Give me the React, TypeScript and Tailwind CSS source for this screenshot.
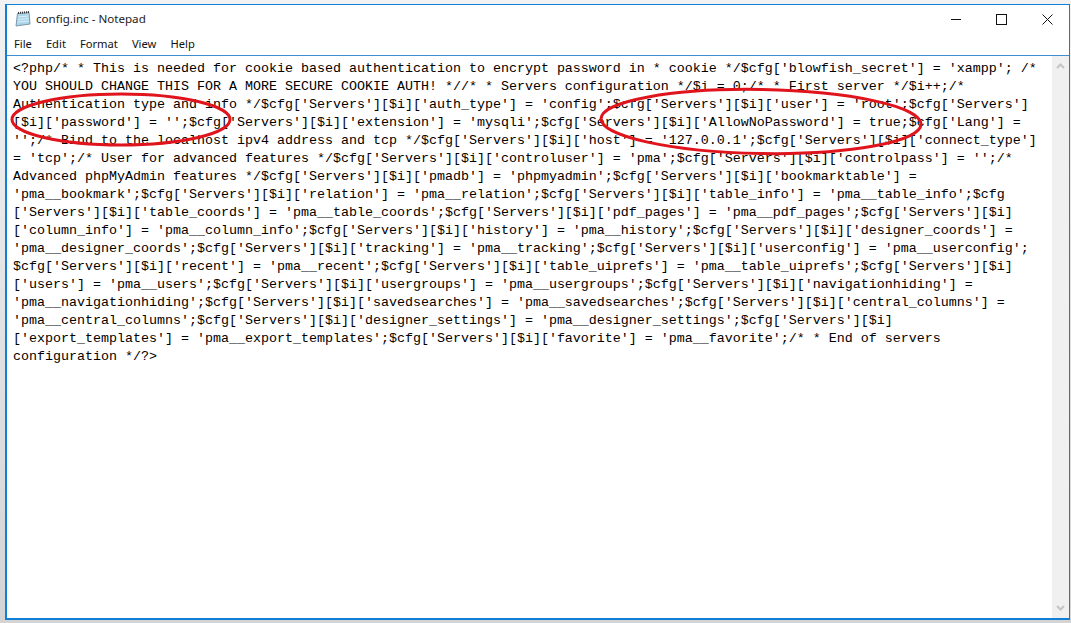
const lines = [
  "<?php/* * This is needed for cookie based authentication to encrypt password in * cookie */$cfg['blowfish_secret'] = 'xampp'; /*",
  "YOU SHOULD CHANGE THIS FOR A MORE SECURE COOKIE AUTH! *//* * Servers configuration */$i = 0;/* * First server */$i++;/*",
  "Authentication type and info */$cfg['Servers'][$i]['auth_type'] = 'config';$cfg['Servers'][$i]['user'] = 'root';$cfg['Servers']",
  "[$i]['password'] = '';$cfg['Servers'][$i]['extension'] = 'mysqli';$cfg['Servers'][$i]['AllowNoPassword'] = true;$cfg['Lang'] =",
  "'';/* Bind to the localhost ipv4 address and tcp */$cfg['Servers'][$i]['host'] = '127.0.0.1';$cfg['Servers'][$i]['connect_type']",
  "= 'tcp';/* User for advanced features */$cfg['Servers'][$i]['controluser'] = 'pma';$cfg['Servers'][$i]['controlpass'] = '';/*",
  "Advanced phpMyAdmin features */$cfg['Servers'][$i]['pmadb'] = 'phpmyadmin';$cfg['Servers'][$i]['bookmarktable'] =",
  "'pma__bookmark';$cfg['Servers'][$i]['relation'] = 'pma__relation';$cfg['Servers'][$i]['table_info'] = 'pma__table_info';$cfg",
  "['Servers'][$i]['table_coords'] = 'pma__table_coords';$cfg['Servers'][$i]['pdf_pages'] = 'pma__pdf_pages';$cfg['Servers'][$i]",
  "['column_info'] = 'pma__column_info';$cfg['Servers'][$i]['history'] = 'pma__history';$cfg['Servers'][$i]['designer_coords'] =",
  "'pma__designer_coords';$cfg['Servers'][$i]['tracking'] = 'pma__tracking';$cfg['Servers'][$i]['userconfig'] = 'pma__userconfig';",
  "$cfg['Servers'][$i]['recent'] = 'pma__recent';$cfg['Servers'][$i]['table_uiprefs'] = 'pma__table_uiprefs';$cfg['Servers'][$i]",
  "['users'] = 'pma__users';$cfg['Servers'][$i]['usergroups'] = 'pma__usergroups';$cfg['Servers'][$i]['navigationhiding'] =",
  "'pma__navigationhiding';$cfg['Servers'][$i]['savedsearches'] = 'pma__savedsearches';$cfg['Servers'][$i]['central_columns'] =",
  "'pma__central_columns';$cfg['Servers'][$i]['designer_settings'] = 'pma__designer_settings';$cfg['Servers'][$i]",
  "['export_templates'] = 'pma__export_templates';$cfg['Servers'][$i]['favorite'] = 'pma__favorite';/* * End of servers",
  "configuration */?>",
];

const menus = ["File", "Edit", "Format", "View", "Help"];

function NotepadIcon() {
  return (
    <svg width="16" height="16" viewBox="0 0 16 16" className="shrink-0">
      <path d="M2.5 2.5 L14 1.5 L15 13 L1 15 Z" fill="#a9d6ea" stroke="#7d97a8" strokeWidth="1" />
      <path d="M3 6 L13.5 5 M2.8 8.5 L13.8 7.5 M2.5 11 L14 10" stroke="#dff0f8" strokeWidth="1" />
      <path d="M3 2 L14 1" stroke="#3a3a3a" strokeWidth="2" strokeDasharray="1 1" />
    </svg>
  );
}

export default function App() {
  return (
    <div className="h-[623px] w-[1071px] overflow-hidden bg-gradient-to-b from-[#f2f2f2] to-[#d4d4d4] pt-[4px] pr-[1px] pb-[3px] pl-[5px] font-['Noto_Sans','Liberation_Sans',sans-serif]">
      <div className="relative flex h-full flex-col border-t border-r border-b-2 border-l-2 border-[#0f7fd8] bg-white">
        <div className="flex h-[28px] items-center gap-[5px] pl-[8px] text-[11.6px] text-[#222]">
          <NotepadIcon />
          <span>config.inc - Notepad</span>
          <div className="ml-auto flex items-center">
            <svg width="10" height="10" viewBox="0 0 10 10" className="mr-[35px]">
              <path d="M0 5.5 H10" stroke="#111" strokeWidth="1" />
            </svg>
            <svg width="11" height="11" viewBox="0 0 11 11" className="mr-[35px]">
              <rect x="0.5" y="0.5" width="10" height="10" fill="none" stroke="#111" strokeWidth="1" />
            </svg>
            <svg width="11" height="11" viewBox="0 0 11 11" className="mr-[16px]">
              <path d="M0.5 0.5 L10.5 10.5 M10.5 0.5 L0.5 10.5" stroke="#111" strokeWidth="1" />
            </svg>
          </div>
        </div>
        <div className="flex h-[22px] items-center gap-[14px] pl-[7px] text-[11.2px] text-[#111]">
          {menus.map((m) => (
            <span key={m}>{m}</span>
          ))}
        </div>
        <div className="flex min-h-0 flex-1 border-t border-[#3f8fd0]">
          <div className="flex-1 pt-[4px] pl-[6px] font-['Liberation_Mono','DejaVu_Sans_Mono',monospace] text-[13.33px] leading-[18px] text-black">
            {lines.map((l, i) => (
              <div key={i} className="whitespace-pre">
                {l}
              </div>
            ))}
          </div>
          <div className="flex w-[17px] flex-col items-center justify-between bg-[#f0f0f0] py-[7px]">
            <svg width="9" height="6" viewBox="0 0 9 6">
              <path d="M1 5 L4.5 1.5 L8 5" fill="none" stroke="#c4c4c4" strokeWidth="2" />
            </svg>
            <svg width="9" height="6" viewBox="0 0 9 6">
              <path d="M1 1 L4.5 4.5 L8 1" fill="none" stroke="#c4c4c4" strokeWidth="2" />
            </svg>
          </div>
        </div>
        <svg className="pointer-events-none absolute top-[-5px] left-[-7px]" width="1071" height="623" viewBox="0 0 1071 623">
          <ellipse cx="121" cy="119.5" rx="109" ry="25.5" fill="none" stroke="#e0141c" strokeWidth="3" />
          <ellipse cx="761" cy="121.5" rx="160" ry="32" transform="rotate(1 761 121.5)" fill="none" stroke="#e0141c" strokeWidth="3" />
        </svg>
      </div>
    </div>
  );
}
